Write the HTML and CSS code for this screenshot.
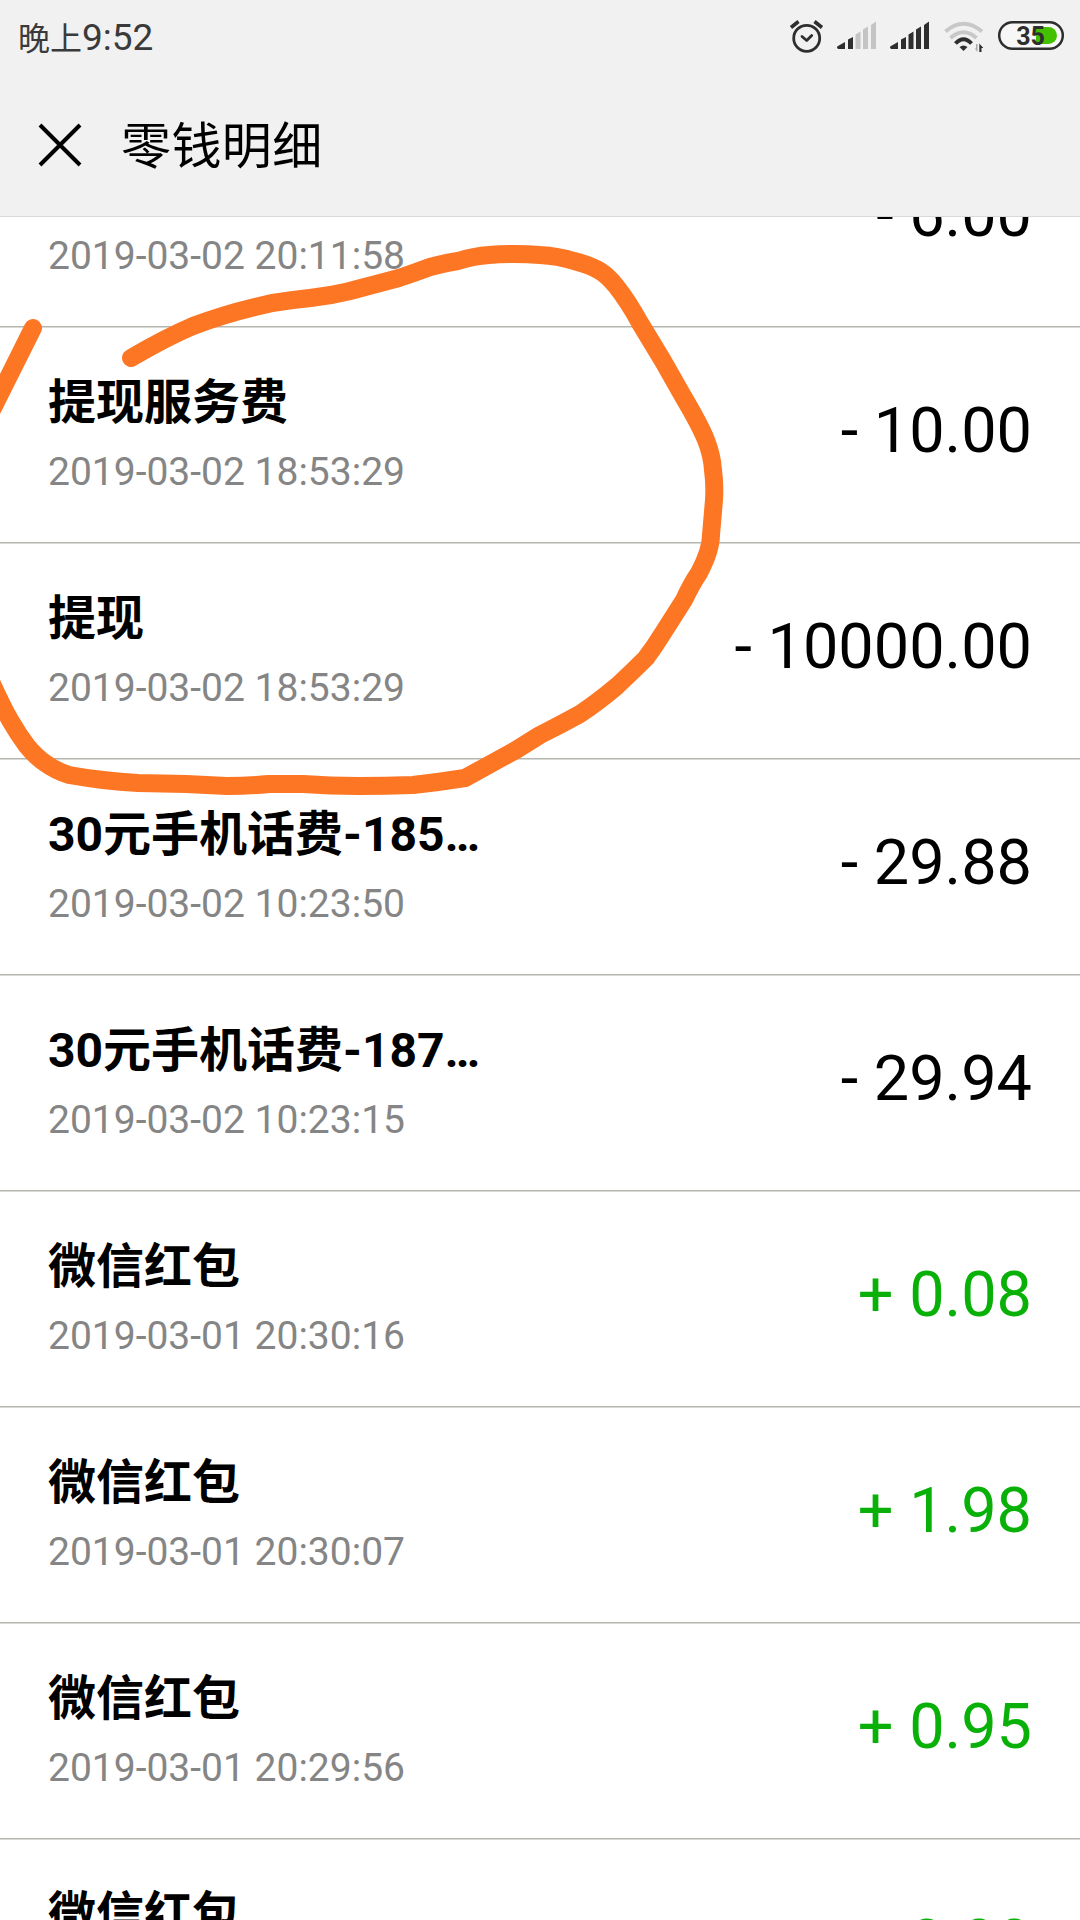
FILE: index.html
```html
<!DOCTYPE html>
<html lang="zh-CN">
<head>
    <meta charset="UTF-8">
    <meta name="viewport" content="width=device-width, initial-scale=1">
    <title>零钱明细</title>
    <link rel="stylesheet" href="styles.css">
</head>
<body>
<div class="screen">
    <div class="top">
        <div class="status">
            <div class="time"><span class="period">晚上</span>9:52</div>
            <svg class="status-icons" width="320" height="80" viewBox="0 0 320 80">
                <!-- alarm -->
                <g fill="none" stroke="#2e2e2e" stroke-width="2.8" stroke-linecap="round">
                    <circle cx="46.7" cy="38.3" r="13"/>
                    <path d="M42 36.5l4.7 4 5-5" stroke-linejoin="round"/>
                    <path d="M31 27.500l7.500-6M62 27.500l-7.500-6" stroke-linecap="butt" stroke-width="3.600"/>
                </g>
                <!-- signal 1 -->
                <path fill="#2e2e2e" d="M85 42v7h-7q-2-2 0-3zM93 37v12h-5V39.500z"/>
                <path fill="#c4c4c4" d="M100.500 31.500V49h-5V34.500zM108 26.500V49h-5V29.500zM116 21.500V49h-5V25z"/>
                <!-- signal 2 -->
                <path fill="#2e2e2e" d="M138 42v7h-7q-2-2 0-3zM146 37v12h-5V39.500zM153.500 31.500V49h-5V34.500zM161 26.500V49h-5V29.500zM169 21.500V49h-5V25z"/>
                <!-- wifi -->
                <g fill="none" stroke-width="4">
                    <path stroke="#c8c8c8" d="M185.500 31.500q18-15.500 36.500 0M190.500 38q13-11.500 26 0"/>
                    <path stroke="#2e2e2e" d="M195.500 43.500q8-8.500 16 0"/>
                </g>
                <path fill="#2e2e2e" d="M199.500 47q4-3 8 0l-4 4z"/>
                <path fill="#aaa" d="M217.500 44v8l-2.800-3.500h1.300v-4.500z"/>
                <path fill="#2e2e2e" d="M219.300 52v-8.500l4 4.500h-1.800v4z"/>
                <!-- battery -->
                <rect x="239.200" y="22.200" width="63.600" height="26.600" rx="13.300" fill="#f7f7f7" stroke="#2e2e2e" stroke-width="2.500"/>
                <path fill="#43c000" d="M276 27h12.500a8.500 8.500 0 0 1 0 17H276z"/>
                <text class="battery" x="270.500" y="45" text-anchor="middle">35</text>
            </svg>
        </div>
        <div class="nav">
            <svg class="close" width="44" height="44" viewBox="0 0 44 44">
                <path d="M2 2l40 40M42 2L2 42" stroke="#000" stroke-width="4"/>
            </svg>
            <div class="nav-title">零钱明细</div>
        </div>
    </div>

    <div class="list">
        <div class="row row-cut">
            <div class="info">
                <div class="name"></div>
                <div class="date">2019-03-02 20:11:58</div>
            </div>
            <div class="amount">- 6.00</div>
        </div>
        <div class="row">
            <div class="info">
                <div class="name">提现服务费</div>
                <div class="date">2019-03-02 18:53:29</div>
            </div>
            <div class="amount">- 10.00</div>
        </div>
        <div class="row">
            <div class="info">
                <div class="name">提现</div>
                <div class="date">2019-03-02 18:53:29</div>
            </div>
            <div class="amount">- 10000.00</div>
        </div>
        <div class="row">
            <div class="info">
                <div class="name">30元手机话费-185…</div>
                <div class="date">2019-03-02 10:23:50</div>
            </div>
            <div class="amount">- 29.88</div>
        </div>
        <div class="row">
            <div class="info">
                <div class="name">30元手机话费-187…</div>
                <div class="date">2019-03-02 10:23:15</div>
            </div>
            <div class="amount">- 29.94</div>
        </div>
        <div class="row">
            <div class="info">
                <div class="name">微信红包</div>
                <div class="date">2019-03-01 20:30:16</div>
            </div>
            <div class="amount income">+ 0.08</div>
        </div>
        <div class="row">
            <div class="info">
                <div class="name">微信红包</div>
                <div class="date">2019-03-01 20:30:07</div>
            </div>
            <div class="amount income">+ 1.98</div>
        </div>
        <div class="row">
            <div class="info">
                <div class="name">微信红包</div>
                <div class="date">2019-03-01 20:29:56</div>
            </div>
            <div class="amount income">+ 0.95</div>
        </div>
        <div class="row">
            <div class="info">
                <div class="name">微信红包</div>
            </div>
            <div class="amount income">+ 0.88</div>
        </div>
    </div>

    <!-- marker drawn over the list -->
    <svg class="marker" width="1080" height="1920" viewBox="0 0 1080 1920">
        <path d="M131 358Q165 338 193 326Q222 315 255 307Q274 302 293 300Q312 298 331 295Q348 292 365 287L399 278Q414 273 430 267Q444 263 458 261Q474 256 489 255Q515 253 540 255Q558 256 574 261Q590 265 600 271Q608 276 616 286Q628 301 640 323L663 361L684 398Q700 425 706 440Q712 455 713 470Q715 485 714 500L711 535Q711 550 699 573Q692 583 684 600L663 633Q655 646 646 658Q633 671 617 686Q598 702 580 714Q560 725 540 735L516 750L465 778Q440 782 413 785Q385 786 358 786Q330 786 303 784L269 784Q248 786 227 786Q206 785 186 784L138 783Q120 782 103 780Q86 778 69 775Q56 771 45 763Q36 757 27 746Q18 734 10 720Q2 706 -12 675"/>
        <path d="M33 328L-10 414"/>
    </svg>
</div>
</body>
</html>
```
FILE: styles.css
```css
body {
    margin: 0;
    background: #fff;
    font-family: Roboto, "Noto Sans CJK SC", sans-serif;
}
.screen {
    position: relative;
    width: 1080px;
    height: 1920px;
    overflow: hidden;
    display: flex;
    flex-direction: column;
}

/* status bar + nav */
.top {
    height: 216px;
    background: #f1f1f1;
    border-bottom: 1px solid #d9d9d9;
}
.status {
    display: flex;
    justify-content: space-between;
    height: 80px;
    padding-left: 18px;
}
.time {
    font-size: 37px;
    line-height: 76px;
    color: #3a3a3a;
}
.period {
    font-size: 32px;
}
.battery {
    font: bold 25px Roboto, sans-serif;
    fill: #2e2e2e;
}
.nav {
    display: flex;
    align-items: center;
    height: 129px;
    padding-left: 38px;
}
.nav-title {
    margin-left: 39px;
    padding-top: 4px;
    font-size: 50px;
    line-height: 80px;
    letter-spacing: 0.4px;
    color: #000;
}

/* records */
.list {
    flex: 1;
    overflow: hidden;
}
.row {
    display: flex;
    justify-content: space-between;
    box-sizing: border-box;
    height: 216px;
    padding: 39px 48px 0;
    border-bottom: 1px solid #b6b6b0;
    box-shadow: 0 1px 0 #d9d9d5;
}
.row-cut {
    margin-top: -106px;
}
.info {
    padding-top: 1px;
}
.name {
    height: 72px;
    font-size: 48px;
    font-weight: bold;
    line-height: 72px;
    color: #000;
}
.date {
    font-size: 39px;
    line-height: 67px;
    color: #858585;
}
.amount {
    font-size: 63px;
    line-height: 129px;
    color: #000;
}
.income {
    color: #09b007;
}

.marker {
    position: absolute;
    left: 0;
    top: 0;
    fill: none;
    stroke: #fd7624;
    stroke-width: 18px;
    stroke-linecap: round;
    stroke-linejoin: round;
}
```
